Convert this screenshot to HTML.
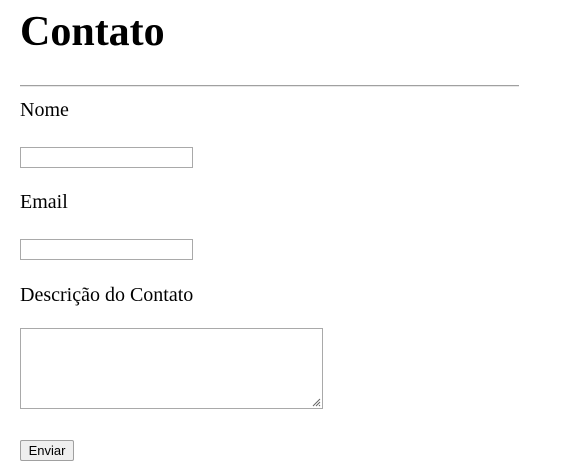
<!DOCTYPE html>
<html><head><style>
body{margin:0;width:573px;height:474px;background:#fff;font-family:"Liberation Serif",serif;color:#000;position:relative;overflow:hidden}
.a{position:absolute;margin:0;white-space:nowrap}
h1{font-size:42px;font-weight:bold;line-height:42px}
.l{font-size:20px;line-height:22px}
.in{position:absolute;border:1px solid #a9a9a9;background:#fff;box-sizing:border-box}
</style></head><body>
<h1 class="a" style="left:20px;top:11px">Contato</h1>
<div class="a" style="left:20px;top:85px;width:499px;height:0;border-top:1px solid #a0a0a0;border-bottom:1px solid #e8e8e8"></div>
<div class="a l" style="left:20px;top:99px">Nome</div>
<div class="in" style="left:20px;top:147px;width:173px;height:21px"></div>
<div class="a l" style="left:20px;top:191px">Email</div>
<div class="in" style="left:20px;top:239px;width:173px;height:21px"></div>
<div class="a l" style="left:20px;top:284px">Descrição do Contato</div>
<div class="in" style="left:20px;top:328px;width:303px;height:81px">
<svg style="position:absolute;right:1px;bottom:1px" width="9" height="9"><path d="M8 1L1 8M8 4L4 8M8 7L7 8" stroke="#666" stroke-width="1"/></svg></div>
<div class="a" style="left:20px;top:440px;width:54px;height:21px;box-sizing:border-box;border:1px solid #a0a0a0;border-radius:2px;background:#efefef;font:13px 'Liberation Sans',sans-serif;text-align:center;line-height:19px">Enviar</div>
</body></html>
